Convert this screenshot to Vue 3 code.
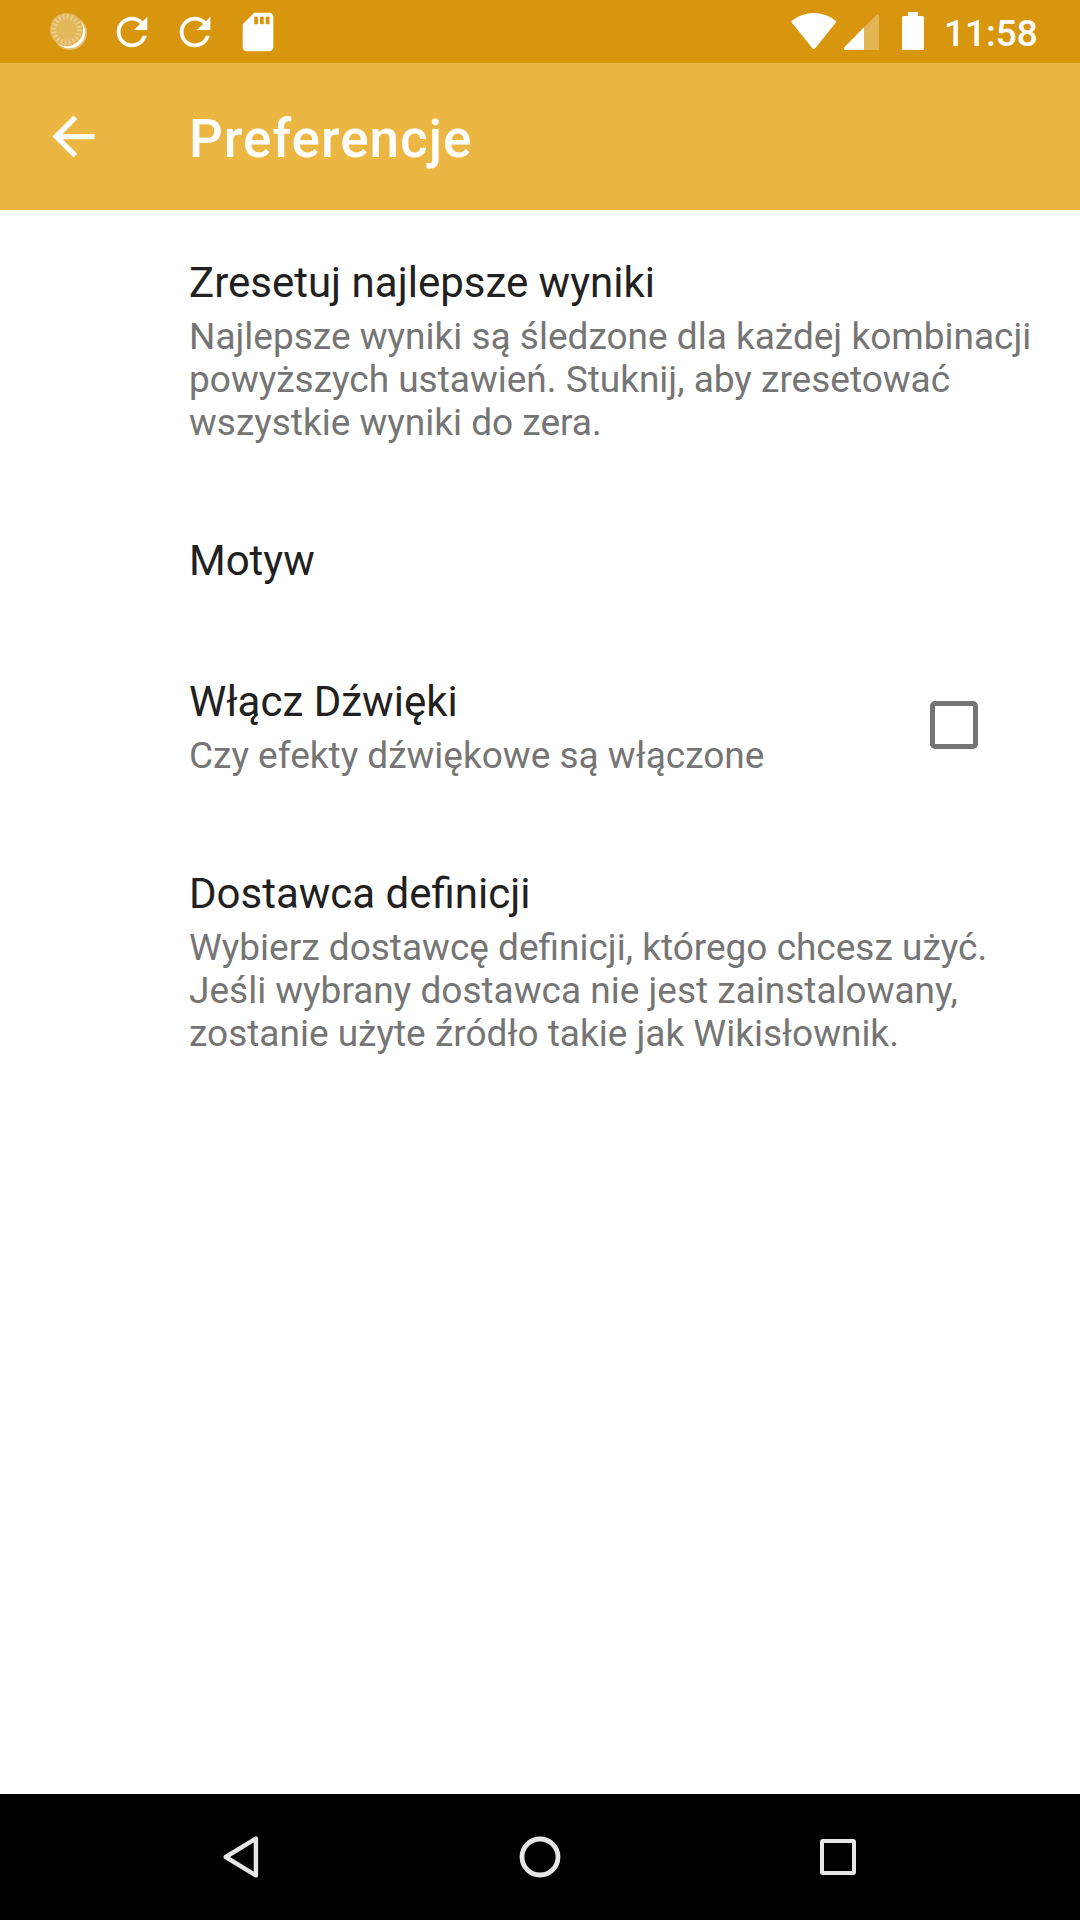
<script setup>
const preferences = [
  {
    title: 'Zresetuj najlepsze wyniki',
    summary: [
      'Najlepsze wyniki są śledzone dla każdej kombinacji',
      'powyższych ustawień. Stuknij, aby zresetować',
      'wszystkie wyniki do zera.',
    ],
  },
  { title: 'Motyw', summary: [] },
  { title: 'Włącz Dźwięki', summary: ['Czy efekty dźwiękowe są włączone'], checkbox: true },
  {
    title: 'Dostawca definicji',
    summary: [
      'Wybierz dostawcę definicji, którego chcesz użyć.',
      'Jeśli wybrany dostawca nie jest zainstalowany,',
      'zostanie użyte źródło takie jak Wikisłownik.',
    ],
  },
]
const refreshPath =
  'M17.65 6.35C16.2 4.9 14.21 4 12 4c-4.42 0-7.99 3.58-7.99 8s3.57 8 7.99 8c3.73 0 6.84-2.55 7.73-6h-2.08c-.82 2.33-3.04 4-5.65 4-3.31 0-6-2.69-6-6s2.69-6 6-6c1.66 0 3.14.69 4.22 1.78L13 11h7V4l-2.35 2.35z'
</script>

<template>
  <div class="screen">
    <div class="status-bar">
      <div class="notifications">
        <svg class="note" viewBox="0 0 46 46">
          <circle cx="24" cy="24" r="17" fill="#fff" opacity=".4" />
          <circle cx="23.2" cy="23.2" r="16" fill="#fff" />
          <circle cx="20.6" cy="20.6" r="16.6" fill="#e3b85c" />
          <circle cx="20.6" cy="20.6" r="12.8" fill="none" stroke="#ecd092" stroke-width="5" stroke-dasharray="1.6 2.42" />
        </svg>
        <svg v-for="n in 2" :key="n" class="note" viewBox="0 0 24 24"><path :d="refreshPath" fill="#fff" /></svg>
        <svg class="note" viewBox="0 0 24 24">
          <path fill="#fff" d="M18 2h-8L4.02 8 4 20c0 1.1.9 2 2 2h12c1.1 0 2-.9 2-2V4c0-1.1-.9-2-2-2zm-6 6h-2V4h2v4zm3 0h-2V4h2v4zm3 0h-2V4h2v4z" />
        </svg>
      </div>
      <div class="system">
        <svg class="wifi" width="46" height="63" viewBox="0 0 46 63">
          <path fill="#fff" d="M.9 22.7Q0 21.5 1.200 20.500Q10.500 13 22.800 13T44.400 20.500Q45.600 21.500 44.700 22.700L24.200 48.200Q22.800 49.700 21.400 48.200Z" />
        </svg>
        <svg class="cell" width="36" height="63" viewBox="0 0 36 63">
          <path fill="#fff" opacity=".3" d="M20 50V27.500L32.600 15Q35 13.700 35 16V48.500Q35 50 33.500 50Z" />
          <path fill="#fff" d="M20 27.300V50H1Q-.8 49 .6 47Z" />
        </svg>
        <svg class="battery" width="22" height="63" viewBox="0 0 22 63">
          <path fill="#fff" d="M6 12H16V16H20.500Q22 16 22 17.500V48.500Q22 50 20.500 50H1.500Q0 50 0 48.500V17.500Q0 16 1.500 16H6Z" />
        </svg>
        <span class="clock">11:58</span>
      </div>
    </div>

    <header class="toolbar">
      <svg class="back" viewBox="0 0 24 24">
        <path fill="#fff" d="M20 11H7.83l5.59-5.59L12 4l-8 8 8 8 1.41-1.41L7.83 13H20v-2z" />
      </svg>
      <h1>Preferencje</h1>
    </header>

    <main class="list">
      <section v-for="p in preferences" :key="p.title" class="item" :class="{ single: !p.summary.length }">
        <div class="texts">
          <div class="title">{{ p.title }}</div>
          <div v-if="p.summary.length" class="summary">
            <div v-for="line in p.summary" :key="line">{{ line }}</div>
          </div>
        </div>
        <span v-if="p.checkbox" class="checkbox"></span>
      </section>
    </main>

    <nav class="nav-bar">
      <div class="slot">
        <svg width="42" height="46" viewBox="0 0 42 46">
          <path d="M34.900 4.600V41.400L4.700 23Z" fill="none" stroke="#e6e6e6" stroke-width="4.400" stroke-linejoin="round" />
        </svg>
      </div>
      <div class="slot">
        <svg width="46" height="46" viewBox="0 0 46 46">
          <circle cx="23" cy="23" r="18" fill="none" stroke="#e6e6e6" stroke-width="4.800" />
        </svg>
      </div>
      <div class="slot"><span class="recents"></span></div>
    </nav>
  </div>
</template>

<style>
body {
  margin: 0;
}
</style>

<style scoped>
.screen {
  display: flex;
  flex-direction: column;
  width: 1080px;
  height: 1920px;
  overflow: hidden;
  background: #fff;
  font-family: Roboto, sans-serif;
}
svg {
  display: block;
  flex: none;
}
.status-bar {
  display: flex;
  justify-content: space-between;
  height: 63px;
  background: #d8960f;
}
.notifications {
  display: flex;
  align-items: center;
  gap: 17px;
  padding-left: 46px;
  padding-top: 1px;
}
.note {
  width: 46px;
  height: 46px;
}
.system {
  display: flex;
  align-items: center;
  width: 289px;
}
.cell {
  margin-left: 7px;
}
.battery {
  margin-left: 22px;
}
.clock {
  margin-left: 20px;
  color: #fff;
  font-size: 37px;
  font-weight: 500;
  line-height: 63px;
  padding-top: 3px;
}
.toolbar {
  display: flex;
  align-items: center;
  height: 147px;
  padding-left: 42px;
  background: #ecb642;
}
.back {
  width: 63px;
  height: 63px;
}
h1 {
  margin: 5px 0 0 84px;
  color: #fff;
  font-size: 53px;
  font-weight: 500;
  line-height: 62px;
  letter-spacing: 1px;
}
.list {
  flex: 1;
}
.item {
  display: flex;
  align-items: center;
  justify-content: space-between;
  padding: 44px 102px 44px 189px;
}
.item.single {
  padding-bottom: 40px;
}
.title {
  color: #212121;
  font-size: 42px;
  line-height: 57px;
  white-space: nowrap;
}
.summary {
  margin-top: 4px;
  color: #757575;
  font-size: 37px;
  line-height: 43px;
  white-space: nowrap;
}
.texts {
  width: 0;
}
.checkbox {
  box-sizing: border-box;
  width: 48px;
  height: 48px;
  border: 5px solid #757575;
  border-radius: 5px;
}
.nav-bar {
  display: flex;
  justify-content: center;
  height: 126px;
  background: #000;
}
.slot {
  display: flex;
  align-items: center;
  justify-content: center;
  width: 298px;
}
.recents {
  box-sizing: border-box;
  width: 36px;
  height: 36px;
  border: 4.5px solid #e6e6e6;
  border-radius: 3px;
}
</style>
